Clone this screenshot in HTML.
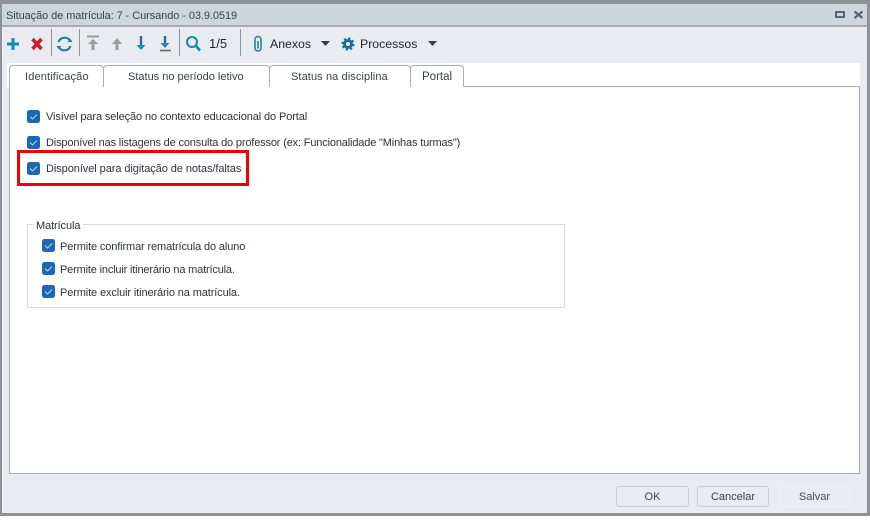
<!DOCTYPE html>
<html><head><meta charset="utf-8">
<style>
html,body{margin:0;padding:0;background:#fff}
#r{position:relative;width:870px;height:521px;overflow:hidden;background:#fff;font-family:"Liberation Sans",sans-serif;color:#333b45}
#r div,#r svg{position:absolute}
.t{position:absolute;white-space:nowrap;font-size:11px;line-height:14px;color:#2b333c}
.cb{width:13px;height:13px;background:#1a68b4;border-radius:2.5px}
.sep{width:1px;height:27px;top:29px;background:#8f9498}
.tab{border:1px solid #a8adb2;border-bottom:none;border-radius:4px 4px 0 0;background:#fff;box-sizing:border-box}
.btn{box-sizing:border-box;height:21px;top:486px;border:1px solid #c9cdd1;border-radius:3px;background:#e8ebf0;text-align:center;font-size:11px;line-height:20px;color:#3a424b}
</style></head><body>
<div id="r">
<div style="left:0;top:0;width:870px;height:516px;background:#8e9296"></div>
<div style="left:2px;top:4px;width:865px;height:509px;background:#e8ebf0"></div>
<div style="left:2px;top:4px;width:865px;height:21px;background:#cdd5dd"></div>
<div style="left:2px;top:25px;width:865px;height:2px;background:#a9adb1"></div>
<span class="t" style="left:6px;top:9px;letter-spacing:-.08px;color:#3a424b">Situação de matrícula: 7 - Cursando - 03.9.0519</span>
<svg style="left:830px;top:8px" width="36" height="14"><rect x="6" y="4" width="8" height="5" fill="none" stroke="#5b6470" stroke-width="2"/><path d="M24.500 3.500l8 6.500M32.500 3.500l-8 6.500" stroke="#5b6470" stroke-width="2.200" fill="none"/></svg>

<svg style="left:0;top:28px" width="250" height="30">
<path d="M13 10v12M7 16h12" stroke="#1688b8" stroke-width="3"/>
<path d="M32.500 11l9 10M41.500 11l-9 10" stroke="#c8232c" stroke-width="3.600"/>
<path d="M58.500 14a6.500 6.500 0 0 1 11.500-1.500M70.500 18a6.500 6.500 0 0 1-11.500 1.500" stroke="#1a7f96" stroke-width="2" fill="none"/>
<path d="M72.500 14h-5l3-3zM56.500 18h5l-3 3z" fill="#1a7f96"/>
<path d="M87 8.500h12" stroke="#9c9c9c" stroke-width="2"/><path d="M93 12v10" stroke="#9c9c9c" stroke-width="3"/><path d="M88 16l5-5 5 5z" fill="#9c9c9c"/>
<path d="M117 14v8" stroke="#9c9c9c" stroke-width="3"/><path d="M112 16l5-6 5 6z" fill="#9c9c9c"/>
<path d="M141 8v10" stroke="#2a6ca0" stroke-width="2.400"/><path d="M136.500 17l4.500 5 4.500-5z" fill="#1a8cb0"/>
<path d="M165 8v9" stroke="#2a6ca0" stroke-width="2.400"/><path d="M160.500 15l4.500 5 4.500-5z" fill="#1a8cb0"/><path d="M160 22.500h11" stroke="#666" stroke-width="1.600"/>
<circle cx="192" cy="14" r="5" fill="none" stroke="#1688a8" stroke-width="2"/><path d="M196 18l4 4.500" stroke="#1688a8" stroke-width="2.600"/>
</svg>
<div class="sep" style="left:51px"></div>
<div class="sep" style="left:79px"></div>
<div class="sep" style="left:179px"></div>
<div class="sep" style="left:240px"></div>
<span class="t" style="left:209px;top:37px;font-size:13px;color:#20262c">1/5</span>
<svg style="left:250px;top:34px" width="190" height="20">
<path d="M8 7v7.500M5 15V5.500a3 3 0 0 1 6 0V14a3 3 0 0 1-6 0" fill="none" stroke="#3d8f9c" stroke-width="1.800"/>
<path d="M71 7h9l-4.500 5z" fill="#3a3f46"/>
<circle cx="98" cy="10" r="5" fill="#14719f"/>
<circle cx="98" cy="10" r="5.500" fill="none" stroke="#14719f" stroke-width="2.200" stroke-dasharray="2.200 2.120"/>
<circle cx="98" cy="10" r="2" fill="#e8ebf0"/>
<path d="M178 7h9l-4.500 5z" fill="#3a3f46"/>
</svg>
<span class="t" style="left:270px;top:37px;font-size:12.300px;color:#20262c">Anexos</span>
<span class="t" style="left:360px;top:37px;font-size:12.300px;color:#20262c">Processos</span>

<div style="left:7px;top:63px;width:853px;height:24px;background:#fff"></div>
<div style="left:9px;top:86px;width:851px;height:388px;box-sizing:border-box;border:1px solid #a8adb2;background:#fff"></div>
<div class="tab" style="left:9px;top:65px;width:95px;height:22px"></div>
<div class="tab" style="left:103px;top:65px;width:167px;height:22px"></div>
<div class="tab" style="left:269px;top:65px;width:142px;height:22px"></div>
<div class="tab" style="left:410px;top:65px;width:54px;height:22px;border-bottom:1px solid #fff"></div>
<span class="t" style="left:25px;top:70px;letter-spacing:.15px;color:#3a424b">Identificação</span>
<span class="t" style="left:128px;top:70px;color:#3a424b">Status no período letivo</span>
<span class="t" style="left:291px;top:70px;letter-spacing:.1px;color:#3a424b">Status na disciplina</span>
<span class="t" style="left:422px;top:70px;font-size:11.500px;color:#3a424b">Portal</span>

<div class="cb" style="left:27px;top:110px"></div>
<div class="cb" style="left:27px;top:136px"></div>
<div class="cb" style="left:27px;top:162px"></div>
<span class="t" style="left:46px;top:110px;letter-spacing:-.11px">Visível para seleção no contexto educacional do Portal</span>
<span class="t" style="left:46px;top:136px;letter-spacing:-.16px">Disponível nas listagens de consulta do professor (ex: Funcionalidade "Minhas turmas")</span>
<span class="t" style="left:46px;top:162px;letter-spacing:-.07px">Disponível para digitação de notas/faltas</span>
<div style="left:17px;top:150px;width:232px;height:36px;box-sizing:border-box;border:3px solid #f00000"></div>

<div style="left:27px;top:224px;width:538px;height:84px;box-sizing:border-box;border:1px solid #d6d8da"></div>
<div style="left:33px;top:218px;width:50px;height:14px;background:#fff"></div>
<span class="t" style="left:36px;top:219px;letter-spacing:-.1px;color:#2a3038">Matrícula</span>
<div class="cb" style="left:42px;top:239px"></div>
<div class="cb" style="left:42px;top:262px"></div>
<div class="cb" style="left:42px;top:285px"></div>
<span class="t" style="left:60px;top:240px;letter-spacing:-.13px">Permite confirmar rematrícula do aluno</span>
<span class="t" style="left:60px;top:263px;letter-spacing:-.17px">Permite incluir itinerário na matrícula.</span>
<span class="t" style="left:60px;top:286px;letter-spacing:-.12px">Permite excluir itinerário na matrícula.</span>
<svg style="left:0;top:100px" width="60" height="200" fill="none" stroke="#b9d4ee" stroke-width="1">
<path d="M30 16.500l2.500 2.500 4.500-4.500M30 42.500l2.500 2.500 4.500-4.500M30 68.500l2.500 2.500 4.500-4.500M45 145.500l2.500 2.500 4.500-4.500M45 168.500l2.500 2.500 4.500-4.500M45 191.500l2.500 2.500 4.500-4.500"/>
</svg>

<div class="btn" style="left:616px;width:73px">OK</div>
<div class="btn" style="left:697px;width:72px">Cancelar</div>
<div class="btn" style="left:779px;width:71px;border-color:#f2f3f5;color:#4a5058">Salvar</div>
</div>
</body></html>
